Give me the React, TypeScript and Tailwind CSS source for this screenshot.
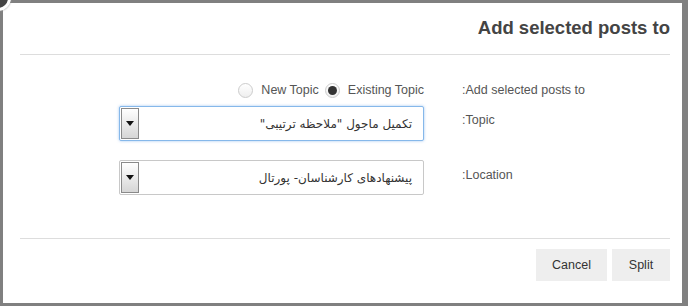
import React from "react";

const font = "font-['Liberation_Sans','DejaVu_Sans',sans-serif]";

function DropBtn() {
  return (
    <div className="w-[18px] h-full border border-[#8a8a8a] bg-gradient-to-b from-white to-[#d6d6d6] flex items-center justify-center shrink-0">
      <svg width="8" height="5" viewBox="0 0 8 5">
        <path d="M0 0 H8 L4 5 Z" fill="#111" />
      </svg>
    </div>
  );
}

function Select({ value, focused }: { value: string; focused?: boolean }) {
  return (
    <div
      className={
        "w-[305px] h-[35px] rounded-[2px] bg-white flex items-stretch p-px shrink-0 " +
        (focused
          ? "border border-[#86b8ea] shadow-[0_0_3px_rgba(100,160,230,0.6)]"
          : "border border-[#c8c8c8]")
      }
    >
      <DropBtn />
      <div
        dir="rtl"
        className="flex-1 flex items-center pr-[10px] text-[12px] text-[#333] font-['DejaVu_Sans',sans-serif]"
      >
        {value}
      </div>
    </div>
  );
}

function Radio({ checked }: { checked?: boolean }) {
  return (
    <div className="w-[15px] h-[15px] shrink-0 rounded-full border border-[#cccccc] bg-gradient-to-b from-white to-[#eeeeee] flex items-center justify-center">
      {checked && <div className="w-[9px] h-[9px] rounded-full bg-[#333]" />}
    </div>
  );
}

export default function App() {
  return (
    <div className={"relative w-[688px] h-[306px] bg-[#808080] pt-[3px] pl-[3px] overflow-hidden " + font}>
      <div className="w-[679px] h-[300px] bg-white flex flex-col">
        <div className="h-[51px] pt-[14px] pr-[12px] flex justify-end">
          <div className="text-[18.5px] leading-[22px] font-bold text-[#444]">Add selected posts to</div>
        </div>
        <div className="h-px bg-[#dddddd] ml-[17px] mr-[12px]" />

        <div className="mt-[27px] flex pl-[116px]">
          <div className="w-[305px] h-[16px] flex items-center justify-end text-[12.5px] text-[#555]">
            <Radio />
            <span className="ml-[8px] leading-[16px]">New Topic</span>
            <div className="ml-[6px]">
              <Radio checked />
            </div>
            <span className="ml-[8px] leading-[16px]">Existing Topic</span>
          </div>
          <div dir="rtl" className="ml-[38px] text-left text-[12.5px] leading-[16px] text-[#555]">
            Add selected posts to:
          </div>
        </div>

        <div className="mt-[8px] flex pl-[116px]">
          <Select focused value={'تکمیل ماجول "ملاحظه ترتیبی"'} />
          <div dir="rtl" className="ml-[38px] pt-[6px] text-left text-[12.5px] leading-[16px] text-[#555]">
            Topic:
          </div>
        </div>

        <div className="mt-[19px] flex pl-[116px]">
          <Select value="پیشنهادهای کارشناسان- پورتال" />
          <div dir="rtl" className="ml-[38px] pt-[7px] text-left text-[12.5px] leading-[16px] text-[#555]">
            Location:
          </div>
        </div>

        <div className="mt-[43px] h-px bg-[#dddddd] ml-[17px] mr-[12px]" />

        <div className="mt-[10px] flex justify-end gap-[5px] pr-[12px]">
          <button className="w-[71px] h-[32px] bg-[#eeeeee] text-[12.5px] text-[#333]">Cancel</button>
          <button className="w-[58px] h-[32px] bg-[#eeeeee] text-[12.5px] text-[#333]">Split</button>
        </div>
      </div>

      <div className="absolute left-[-15px] top-[-15px] w-[26px] h-[26px] rounded-full bg-[#444] border-[3px] border-white shadow-[0_0_2px_#999]" />
    </div>
  );
}
